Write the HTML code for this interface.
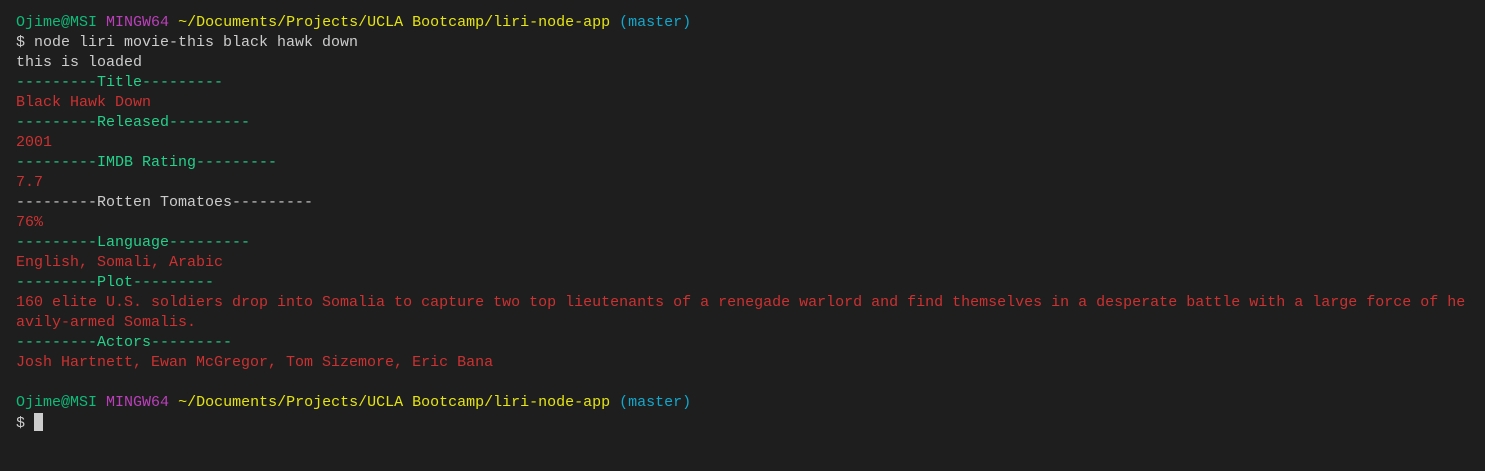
<!DOCTYPE html>
<html><head><meta charset="utf-8"><style>
html,body{margin:0;background:#1e1e1e;width:1485px;height:471px;overflow:hidden}
pre{margin:0;padding:13px 0 0 16px;font-family:"Liberation Mono",monospace;font-size:15px;line-height:20px;color:#cccccc;white-space:pre}
.g{color:#0dbc79}.m{color:#bc3fbc}.y{color:#e5e510}.c{color:#11a8cd}.r{color:#cd3131}.bg{color:#23d18b}
.cur{display:inline-block;width:9px;height:18px;background:#cccccc;vertical-align:-4px}
</style></head><body><pre><span class="g">Ojime@MSI</span> <span class="m">MINGW64</span> <span class="y">~/Documents/Projects/UCLA Bootcamp/liri-node-app</span> <span class="c">(master)</span>
$ node liri movie-this black hawk down
this is loaded
<span class="bg">---------Title---------</span>
<span class="r">Black Hawk Down</span>
<span class="bg">---------Released---------</span>
<span class="r">2001</span>
<span class="bg">---------IMDB Rating---------</span>
<span class="r">7.7</span>
---------Rotten Tomatoes---------
<span class="r">76%</span>
<span class="bg">---------Language---------</span>
<span class="r">English, Somali, Arabic</span>
<span class="bg">---------Plot---------</span>
<span class="r">160 elite U.S. soldiers drop into Somalia to capture two top lieutenants of a renegade warlord and find themselves in a desperate battle with a large force of he
avily-armed Somalis.</span>
<span class="bg">---------Actors---------</span>
<span class="r">Josh Hartnett, Ewan McGregor, Tom Sizemore, Eric Bana</span>

<span class="g">Ojime@MSI</span> <span class="m">MINGW64</span> <span class="y">~/Documents/Projects/UCLA Bootcamp/liri-node-app</span> <span class="c">(master)</span>
$ <span class="cur"></span></pre></body></html>
